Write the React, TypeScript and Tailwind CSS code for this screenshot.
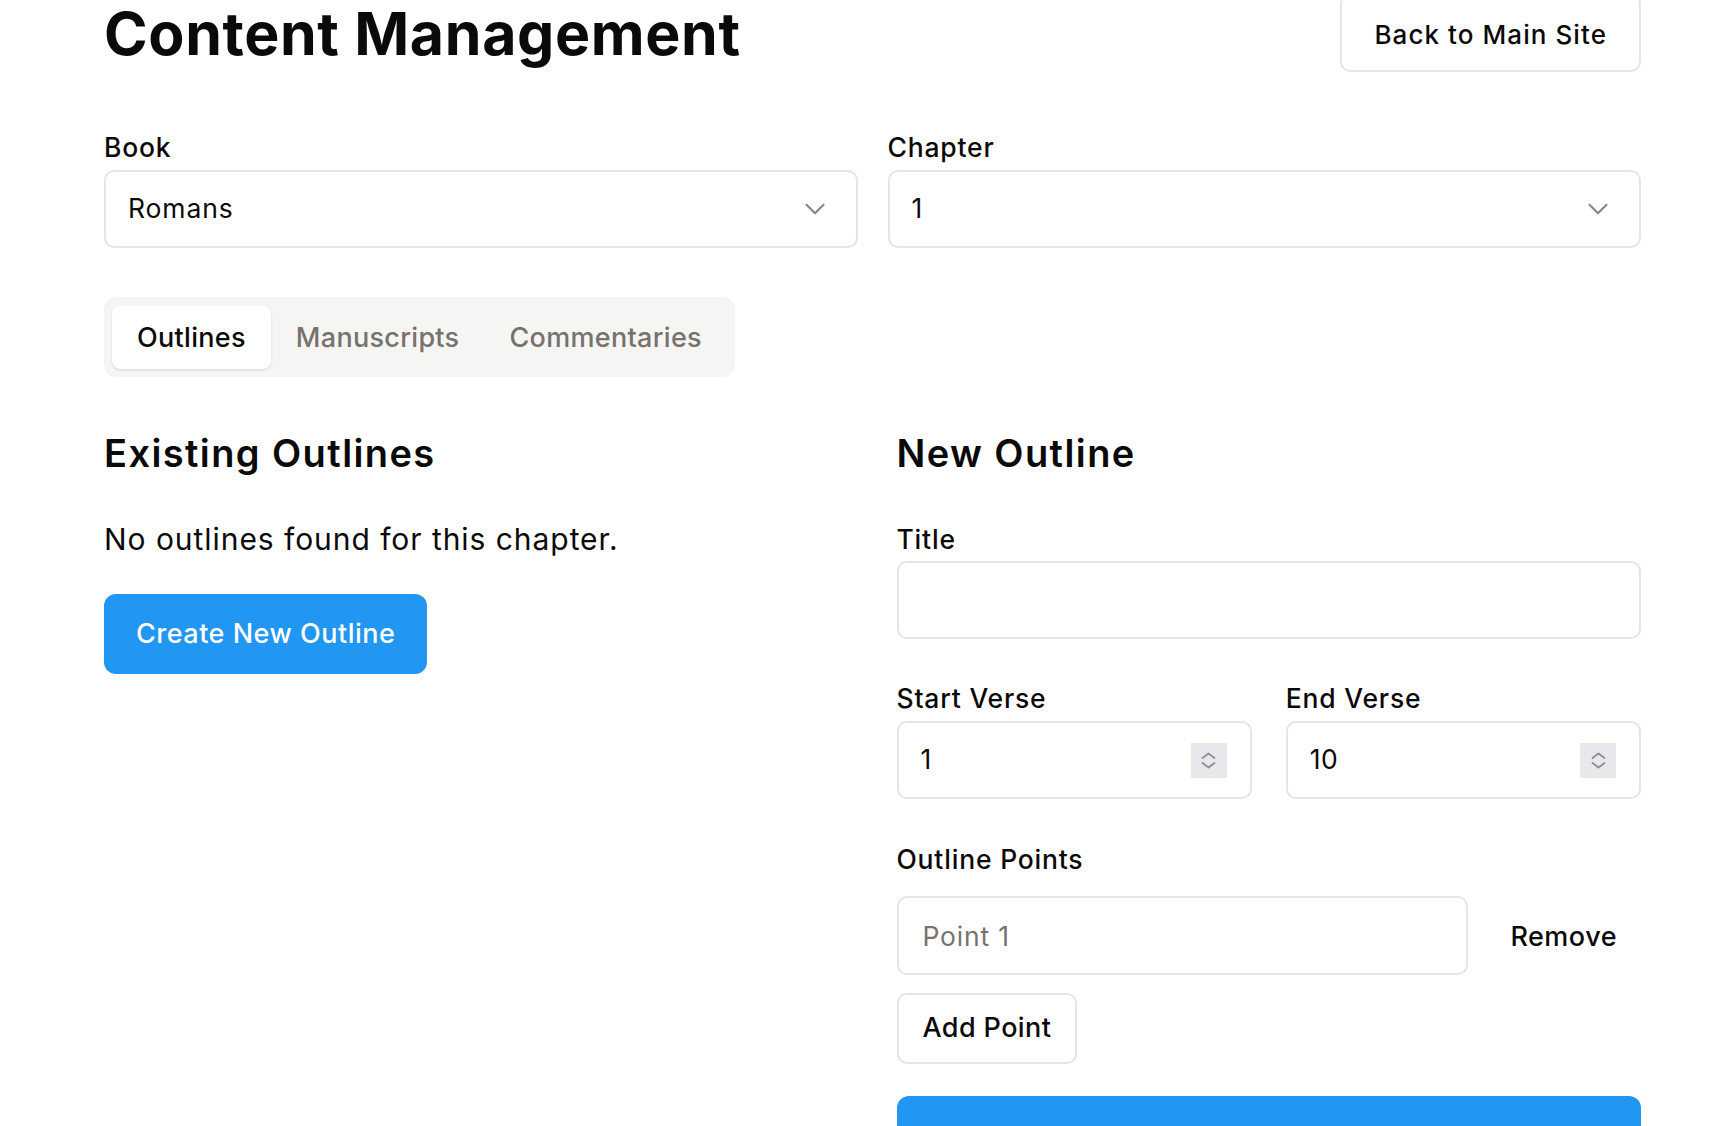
import React, { useState } from "react";
import { ChevronDown } from "lucide-react";

const font = { fontFamily: "Inter, 'Noto Sans', sans-serif" };

// little up/down arrows like the browser's number spinner
const Spinner = () => {
  return (
    <div className="flex h-[35px] w-[36px] items-center justify-center bg-[#e8e8ec]">
      <svg width="15" height="17" viewBox="0 0 15 17" fill="none" stroke="#8e8e9a" strokeWidth="1.8" strokeLinecap="round" strokeLinejoin="round">
        <polyline points="1.5,6 7.5,1.5 13.5,6" />
        <polyline points="1.5,11 7.5,15.5 13.5,11" />
      </svg>
    </div>
  );
};

const NumberField = ({ value }: { value: string }) => {
  return (
    <div className="flex h-[78px] items-center justify-between rounded-[10px] border-2 border-[#e7e5e4] bg-white pl-[22px] pr-[23px]">
      <span className="text-[26.5px] tracking-[0.5px] text-[#0c0a09]">{value}</span>
      <Spinner />
    </div>
  );
};

const SelectBox = ({ value }: { value: string }) => {
  return (
    <div className="flex h-[78px] items-center justify-between rounded-[10px] border-2 border-[#e7e5e4] bg-white pl-[22px] pr-[24px]">
      <span className="text-[26.5px] tracking-[0.9px] text-[#0c0a09]">{value}</span>
      <ChevronDown size={34} strokeWidth={1.5} className="text-[#8a8683]" />
    </div>
  );
};

const Label = ({ children, className = "" }: { children: React.ReactNode; className?: string }) => (
  <label className={"block text-[26.5px] leading-[34px] font-medium tracking-[0.8px] " + className}>{children}</label>
);

export default function App() {
  const [tab, setTab] = useState("outlines");
  const tabs = [
    { id: "outlines", label: "Outlines" },
    { id: "manuscripts", label: "Manuscripts" },
    { id: "commentaries", label: "Commentaries" },
  ];

  return (
    <div className="h-[1126px] overflow-hidden bg-white text-[#0c0a09]" style={font}>
      <div className="-mt-[6px] ml-[104px] w-[1537px]">
        {/* header */}
        <div className="flex items-start justify-between">
          <h1 className="mt-[8px] text-[59px] leading-[64px] font-bold tracking-[0.65px]">
            Content Management
          </h1>
          <button className="h-[78px] rounded-[10px] border-2 border-[#e7e5e4] bg-white px-[32px] pt-[3px] text-[26px] font-medium tracking-[1.07px]">
            Back to Main Site
          </button>
        </div>

        {/* book / chapter */}
        <div className="mt-[58px] grid grid-cols-2 gap-[30px]">
          <div>
            <Label>Book</Label>
            <div className="mt-[6px]">
              <SelectBox value="Romans" />
            </div>
          </div>
          <div>
            <Label>Chapter</Label>
            <div className="mt-[6px]">
              <SelectBox value="1" />
            </div>
          </div>
        </div>

        {/* tabs */}
        <div className="mt-[49px] inline-flex h-[80px] items-center rounded-[12px] bg-[#f5f5f4] p-[8px]">
          {tabs.map((t) => (
            <button
              key={t.id}
              onClick={() => setTab(t.id)}
              className={
                tab === t.id
                  ? "h-[63px] rounded-[8px] bg-white px-[25px] pt-[2px] text-[27px] font-medium tracking-[0.3px] text-[#0c0a09] shadow-sm"
                  : "h-[63px] rounded-[8px] px-[25px] pt-[2px] text-[27px] font-medium tracking-[0.3px] text-[#78716c]"
              }
            >
              {t.label}
            </button>
          ))}
        </div>

        <div className="mt-[54px] grid grid-cols-2 gap-[48px]">
          {/* existing */}
          <div>
            <h2 className="text-[38px] leading-[45px] font-semibold tracking-[1.4px]">Existing Outlines</h2>
            <p className="mt-[41px] text-[30px] leading-[44px] tracking-[0.95px]">No outlines found for this chapter.</p>
            <button className="mt-[33px] h-[80px] rounded-[12px] bg-[#2196f3] px-[32px] text-[27px] font-medium tracking-[0.5px] text-white">
              Create New Outline
            </button>
          </div>

          {/* new outline form */}
          <div>
            <h2 className="text-[38px] leading-[45px] font-semibold tracking-[1.4px]">New Outline</h2>
            <Label className="mt-[46px]">Title</Label>
            <input className="mt-[5px] h-[78px] w-full rounded-[10px] border-2 border-[#e7e5e4] px-[22px] text-[26.5px] outline-none" />

            <div className="mt-[42px] grid grid-cols-2 gap-[34px]">
              <div>
                <Label>Start Verse</Label>
                <div className="mt-[6px]">
                  <NumberField value="1" />
                </div>
              </div>
              <div>
                <Label>End Verse</Label>
                <div className="mt-[6px]">
                  <NumberField value="10" />
                </div>
              </div>
            </div>

            <Label className="mt-[43px]">Outline Points</Label>
            <div className="mt-[20px] flex items-center gap-[18px]">
              <input
                placeholder="Point 1"
                className="h-[79px] flex-1 rounded-[10px] border-2 border-[#e7e5e4] px-[24px] text-[26.5px] tracking-[0.8px] outline-none placeholder:text-[#78716c]"
              />
              <button className="h-[79px] px-[24px] pt-[4px] text-[27px] font-medium tracking-[0.5px]">Remove</button>
            </div>
            <button className="mt-[18px] h-[71px] rounded-[10px] border-2 border-[#e7e5e4] bg-white px-[24px] text-[27px] font-medium tracking-[0.4px]">
              Add Point
            </button>
            <button className="mt-[32px] h-[96px] w-full rounded-[12px] bg-[#2196f3] text-[27px] font-medium tracking-[0.5px] text-white">
              Save Outline
            </button>
          </div>
        </div>
      </div>
    </div>
  );
}
